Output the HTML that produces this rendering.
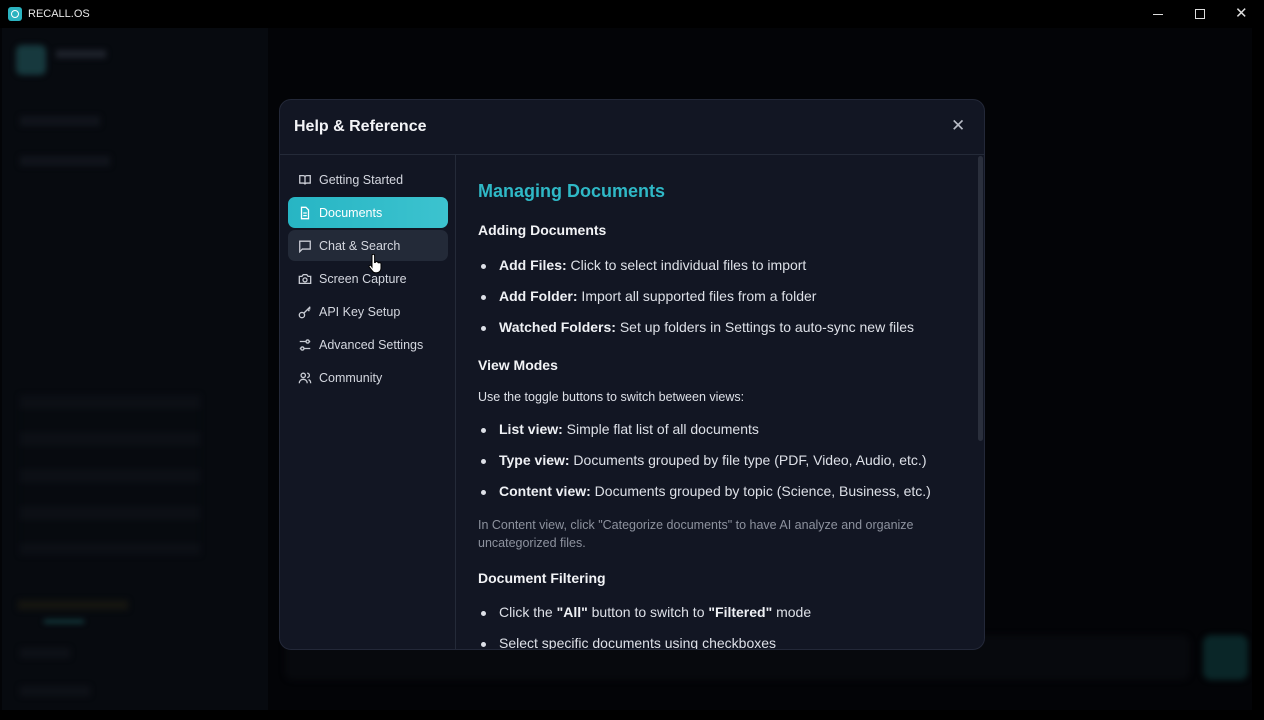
<!DOCTYPE html>
<html><head><meta charset="utf-8"><style>
*{margin:0;padding:0;box-sizing:border-box}
body{width:1264px;height:720px;background:#030407;font-family:"Liberation Sans",sans-serif;position:relative;overflow:hidden;color:#e6e8ee}
.abs{position:absolute}
.blur{filter:blur(3px)}
.modal{position:absolute;left:279px;top:99px;width:706px;height:551px;background:#121623;border:1px solid #232838;border-radius:12px;overflow:hidden}
.nav{position:absolute;left:8px;width:160px;height:31px;border-radius:7px;display:flex;align-items:center;padding-left:10px;font-size:12.5px;color:#d4d7df}
.nav svg{width:14px;height:14px;margin-right:7px;stroke:#c9ccd4;fill:none;stroke-width:1.5}
.c{position:absolute;left:198px;font-size:14px;color:#dde0e7;white-space:nowrap}
.c b{color:#eef0f4}
.li::before{content:"";position:absolute;left:-18px;top:7px;width:5px;height:5px;border-radius:50%;background:#dde0e7}
.h{font-weight:bold;font-size:14px;color:#f2f3f6}
</style></head><body>
<div class="abs" style="left:0;top:0;width:1264px;height:28px;background:#000"></div>
<div class="abs" style="left:8px;top:7px;width:14px;height:14px;background:#2bb3c0;border-radius:3px"><div style="position:absolute;left:3px;top:3px;width:8px;height:8px;border:1.5px solid #fff;border-radius:50%"></div></div>
<div class="abs" style="left:28px;top:8px;font-size:11px;color:#e8e8e8">RECALL.OS</div>
<div class="abs" style="left:1153px;top:14px;width:10px;height:1px;background:#ddd"></div>
<div class="abs" style="left:1195px;top:9px;width:10px;height:10px;border:1px solid #ddd"></div>
<div class="abs" style="left:1235px;top:4px;font-size:15px;color:#ddd">✕</div>
<div class="abs" style="left:2px;top:28px;width:266px;height:682px;background:#070a0f"></div>
<div class="blur">
<div class="abs" style="left:16px;top:45px;width:30px;height:30px;background:#17393e;border-radius:6px"></div>
<div class="abs" style="left:56px;top:50px;width:50px;height:8px;background:#1e222b"></div>
<div class="abs" style="left:20px;top:116px;width:80px;height:10px;background:#11141b"></div>
<div class="abs" style="left:20px;top:156px;width:90px;height:10px;background:#11141b"></div>
<div class="abs" style="left:20px;top:395px;width:180px;height:160px;background:repeating-linear-gradient(#0c0f15 0 14px,#070a0f 14px 37px)"></div>
<div class="abs" style="left:18px;top:600px;width:110px;height:10px;background:#151510"></div>
<div class="abs" style="left:44px;top:620px;width:40px;height:3px;background:#17494c"></div>
<div class="abs" style="left:20px;top:648px;width:50px;height:10px;background:#0e1117"></div>
<div class="abs" style="left:20px;top:686px;width:70px;height:10px;background:#0e1117"></div>
<div class="abs" style="left:285px;top:635px;width:905px;height:45px;background:#07090d;border-radius:8px"></div>
<div class="abs" style="left:1203px;top:635px;width:45px;height:45px;background:#0a2628;border-radius:8px"></div>
</div>
<div class="abs" style="left:0;top:710px;width:1264px;height:10px;background:#000"></div>
<div class="abs" style="left:1252px;top:28px;width:12px;height:692px;background:#000"></div>

<div class="modal">
<div class="abs" style="left:14px;top:18px;font-size:16px;font-weight:bold;color:#f3f4f7">Help &amp; Reference</div>
<div class="abs" style="left:671px;top:16px;font-size:17px;color:#b8bcc6">✕</div>
<div class="abs" style="left:0;top:54px;width:706px;height:1px;background:#242a38"></div>
<div class="abs" style="left:175px;top:55px;width:1px;height:500px;background:#242a38"></div>
<div class="abs" style="left:698px;top:56px;width:5px;height:285px;background:#2a2f3c;border-radius:3px"></div>

<div class="nav" style="top:64px"><svg viewBox="0 0 16 16"><path d="M2 3h4a2 2 0 0 1 2 2v8a2 2 0 0 0-2-1.5H2zM14 3h-4a2 2 0 0 0-2 2v8a2 2 0 0 1 2-1.5h4z"/></svg>Getting Started</div>
<div class="nav" style="top:97px;background:linear-gradient(90deg,#27b5c4,#3cc3cf);color:#fff"><svg viewBox="0 0 16 16" style="stroke:#fff"><path d="M4 1.5h5l3 3v10H4zM6 8h4M6 11h4"/></svg>Documents</div>
<div class="nav" style="top:130px;background:#232a38"><svg viewBox="0 0 16 16"><path d="M2 2.5h12v9H5l-3 3z"/></svg>Chat &amp; Search</div>
<div class="nav" style="top:163px"><svg viewBox="0 0 16 16"><path d="M1.5 5h3l1.5-2h4l1.5 2h3v8h-13z"/><circle cx="8" cy="9" r="2.3"/></svg>Screen Capture</div>
<div class="nav" style="top:196px"><svg viewBox="0 0 16 16"><circle cx="4.5" cy="11.5" r="3"/><path d="M6.7 9.3 14 2M11 5l2 2M12.5 3.5l1.5 1.5"/></svg>API Key Setup</div>
<div class="nav" style="top:229px"><svg viewBox="0 0 16 16"><path d="M2 4h7M13 4h1M2 12h1M7 12h7"/><circle cx="11" cy="4" r="1.8"/><circle cx="5" cy="12" r="1.8"/></svg>Advanced Settings</div>
<div class="nav" style="top:262px"><svg viewBox="0 0 16 16"><circle cx="6" cy="5" r="2.5"/><path d="M1.5 14c0-3 2-4.5 4.5-4.5s4.5 1.5 4.5 4.5M10.5 2.5a2.5 2.5 0 0 1 0 5M12 9.8c1.5.5 2.5 2 2.5 4.2"/></svg>Community</div>
<svg class="abs" style="left:88px;top:154px" width="14" height="20" viewBox="0 0 14 20"><path d="M4 1.5a1.3 1.3 0 0 1 2.6 0v7l1-.2a1.2 1.2 0 0 1 2.3.3l1.2.3a1.2 1.2 0 0 1 1.9.9v4.5c0 2.5-2 4.5-4.5 4.5h-1c-1.5 0-2.5-.8-3.3-2L1.2 13a1.2 1.2 0 0 1 2-1.3L4 13z" fill="#fff" stroke="#000" stroke-width="1"/></svg>

<div class="c" style="top:81px;font-size:18px;font-weight:bold;color:#2fb8c6">Managing Documents</div>
<div class="c h" style="top:122px">Adding Documents</div>
<div class="c li" style="left:219px;top:157px"><b>Add Files:</b> Click to select individual files to import</div>
<div class="c li" style="left:219px;top:188px"><b>Add Folder:</b> Import all supported files from a folder</div>
<div class="c li" style="left:219px;top:219px"><b>Watched Folders:</b> Set up folders in Settings to auto-sync new files</div>
<div class="c h" style="top:257px">View Modes</div>
<div class="c" style="top:290px;font-size:12.5px">Use the toggle buttons to switch between views:</div>
<div class="c li" style="left:219px;top:321px"><b>List view:</b> Simple flat list of all documents</div>
<div class="c li" style="left:219px;top:352px"><b>Type view:</b> Documents grouped by file type (PDF, Video, Audio, etc.)</div>
<div class="c li" style="left:219px;top:383px"><b>Content view:</b> Documents grouped by topic (Science, Business, etc.)</div>
<div class="c" style="top:416px;font-size:12.5px;color:#8d929e;line-height:18px">In Content view, click "Categorize documents" to have AI analyze and organize<br>uncategorized files.</div>
<div class="c h" style="top:470px">Document Filtering</div>
<div class="c li" style="left:219px;top:504px">Click the <b>"All"</b> button to switch to <b>"Filtered"</b> mode</div>
<div class="c li" style="left:219px;top:535px">Select specific documents using checkboxes</div>
</div>
</body></html>
